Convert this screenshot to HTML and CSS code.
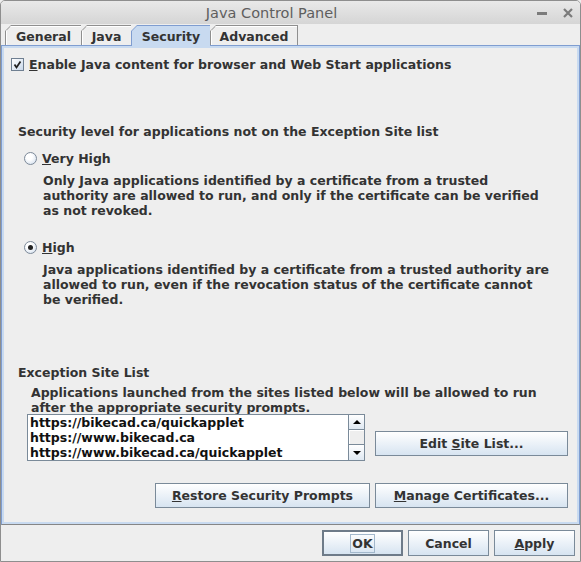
FILE: index.html
```html
<!DOCTYPE html>
<html>
<head>
<meta charset="utf-8">
<title>Java Control Panel</title>
<link rel="stylesheet" href="styles.css">
</head>
<body>
<div class="window">
  <div class="titlebar">
    <span class="title">Java Control Panel</span>
    <span class="wbtns">
      <svg class="wbtn" width="12" height="12" viewBox="0 0 12 12"><rect x="1" y="5" width="10" height="3" fill="#7b7b7b"/></svg>
      <svg class="wbtn" width="12" height="12" viewBox="0 0 12 12"><path d="M2 2 L10 10 M10 2 L2 10" stroke="#7b7b7b" stroke-width="2.2"/></svg>
    </span>
  </div>
  <div class="tabs">
    <div class="tab tab-general"><div class="tab-in">General</div></div>
    <div class="tab tab-java"><div class="tab-in">Java</div></div>
    <div class="tab tab-security selected"><div class="tab-in">Security</div></div>
    <div class="tab tab-advanced last"><div class="tab-in">Advanced</div></div>
  </div>
  <div class="panel">
    <div class="check-row">
      <span class="checkbox">
        <svg width="11" height="11" viewBox="0 0 11 11"><path d="M2.5 5.5 L4.5 8.5 L8.5 2.5" fill="none" stroke="#222" stroke-width="1.8"/></svg>
      </span>
      <span class="label"><u>E</u>nable Java content for browser and Web Start applications</span>
    </div>
    <div class="sec-label">Security level for applications not on the Exception Site list</div>
    <div class="radio-row first">
      <span class="radio"></span>
      <span class="label"><u>V</u>ery High</span>
    </div>
    <div class="desc">Only Java applications identified by a certificate from a trusted<br>authority are allowed to run, and only if the certificate can be verified<br>as not revoked.</div>
    <div class="radio-row second">
      <span class="radio on"><span class="dot"></span></span>
      <span class="label"><u>H</u>igh</span>
    </div>
    <div class="desc">Java applications identified by a certificate from a trusted authority are<br>allowed to run, even if the revocation status of the certificate cannot<br>be verified.</div>
    <div class="exc-label">Exception Site List</div>
    <div class="exc-desc">Applications launched from the sites listed below will be allowed to run<br>after the appropriate security prompts.</div>
    <div class="list-row">
      <div class="list">
        <div class="list-items">
          <div>https://bikecad.ca/quickapplet</div>
          <div>https://www.bikecad.ca</div>
          <div>https://www.bikecad.ca/quickapplet</div>
        </div>
        <div class="scrollbar">
          <div class="sb-btn"><span class="arrow up"></span></div>
          <div class="sb-track"></div>
          <div class="sb-btn"><span class="arrow down"></span></div>
        </div>
      </div>
      <button class="btn btn-edit"><span>Edit <u>S</u>ite List...</span></button>
    </div>
    <div class="panel-buttons">
      <button class="btn btn-restore"><span><u>R</u>estore Security Prompts</span></button>
      <button class="btn btn-manage"><span><u>M</u>anage Certificates...</span></button>
    </div>
  </div>
  <div class="buttonbar">
    <button class="btn btn-dialog default"><span class="focus">OK</span></button>
    <button class="btn btn-dialog"><span>Cancel</span></button>
    <button class="btn btn-dialog"><span><u>A</u>pply</span></button>
  </div>
</div>
</body>
</html>
```
FILE: styles.css
```css
html, body {
  margin: 0;
  padding: 0;
  background: #eeeeee;
}
body {
  font: bold 12.5px "DejaVu Sans", sans-serif;
  color: #333333;
}
.window {
  width: 579px;
  height: 560px;
  border: 1px solid #8e8e8e;
  border-radius: 5px 5px 0 0;
  background: #eeeeee;
  display: flex;
  flex-direction: column;
  overflow: hidden;
}
.titlebar {
  height: 23px;
  flex: none;
  background: linear-gradient(#e9e9e9, #d5d5d5);
  display: flex;
  align-items: center;
  justify-content: center;
  padding-right: 38px;
  position: relative;
}
.title {
  font: normal 14.5px "DejaVu Sans", sans-serif;
  color: #5e5e5e;
}
.wbtns {
  position: absolute;
  right: 6px;
  top: 6px;
  display: flex;
  gap: 14px;
}
.tabs {
  height: 21px;
  flex: none;
  display: flex;
  align-items: flex-end;
  padding-left: 4px;
  position: relative;
  z-index: 2;
}
.tab {
  height: 20px;
  background: #8f8f8f;
  padding: 1px 0 0 1px;
  box-sizing: border-box;
  clip-path: polygon(0 6px, 6px 0, 100% 0, 100% 100%, 0 100%);
}
.tab.last {
  padding-right: 1px;
}
.tab-in {
  height: 100%;
  background: #eeeeee;
  box-shadow: inset 1px 1px 0 #ffffff;
  clip-path: polygon(0 5px, 5px 0, 100% 0, 100% 100%, 0 100%);
  display: flex;
  align-items: center;
  justify-content: center;
  line-height: 15px;
  padding-top: 1px;
  box-sizing: border-box;
}
.tab-general { width: 76px; }
.tab-java { width: 50px; }
.tab-security { width: 79px; }
.tab-advanced { width: 88px; }
.tab.selected {
  background: #7f9dd0;
  height: 21px;
  margin-bottom: -1px;
}
.tab.selected .tab-in {
  background: #c8daf0;
  box-shadow: none;
  padding-bottom: 1px;
}
.panel {
  height: 480px;
  flex: none;
  box-sizing: border-box;
  border: 1px solid #7f9dd0;
  border-bottom-color: #858585;
  box-shadow: inset 0 0 0 2px #c8daf0;
  padding: 2px;
  display: flex;
  flex-direction: column;
  line-height: 15px;
}
.check-row {
  display: flex;
  align-items: center;
  margin: 9px 0 0 7px;
  height: 15px;
}
.checkbox {
  width: 11px;
  height: 11px;
  border: 1px solid #6f7f91;
  background: linear-gradient(135deg, #ffffff, #c9d8ea);
  display: flex;
  margin-right: 5px;
}
.sec-label {
  margin: 52px 0 0 14px;
}
.radio-row {
  display: flex;
  align-items: center;
  height: 15px;
  margin-left: 20px;
}
.radio-row.first { margin-top: 12px; }
.radio-row.second { margin-top: 22px; }
.radio {
  width: 11px;
  height: 11px;
  border: 1px solid #7d8a99;
  border-radius: 50%;
  background: radial-gradient(circle at 40% 35%, #ffffff 30%, #cbd9ea 100%);
  margin-right: 5px;
  display: flex;
  align-items: center;
  justify-content: center;
}
.radio .dot {
  width: 5px;
  height: 5px;
  border-radius: 50%;
  background: #222222;
}
.desc {
  margin: 7px 0 0 39px;
}
.exc-label {
  margin: 58px 0 0 14px;
}
.exc-desc {
  margin: 5px 0 0 27px;
}
.list-row {
  display: flex;
  align-items: flex-start;
  margin: -1px 0 0 23px;
}
.list {
  width: 336px;
  height: 45px;
  border: 1px solid #7a8a99;
  background: #ffffff;
  display: flex;
}
.list-items {
  flex: 1;
  padding: 0 0 0 2px;
  color: #111111;
  line-height: 15px;
  margin-top: 0;
}
.scrollbar {
  width: 15px;
  border-left: 1px solid #7a8a99;
  display: flex;
  flex-direction: column;
  background: #eeeeee;
}
.sb-btn {
  height: 14px;
  border-bottom: 1px solid #7a8a99;
  background: linear-gradient(#ffffff, #dfe8f2);
  display: flex;
  align-items: center;
  justify-content: center;
}
.sb-btn:last-child {
  border-bottom: none;
  border-top: 1px solid #7a8a99;
  height: 15px;
}
.sb-track {
  flex: 1;
  background: #eeeeee;
  box-shadow: inset 1px 1px 0 #ffffff;
}
.arrow {
  width: 0;
  height: 0;
  border-left: 4px solid transparent;
  border-right: 4px solid transparent;
}
.arrow.up { border-bottom: 4px solid #000000; }
.arrow.down { border-top: 4px solid #000000; }
.btn {
  font: bold 12.5px "DejaVu Sans", sans-serif;
  color: #333333;
  border: 1px solid #7a8a99;
  background: linear-gradient(#ffffff, #d7e4f1);
  padding: 0;
  margin: 0;
  display: flex;
  align-items: center;
  justify-content: center;
  box-sizing: border-box;
  white-space: pre;
}
.btn-edit {
  width: 193px;
  height: 25px;
  margin: 17px 0 0 10px;
}
.panel-buttons {
  display: flex;
  justify-content: flex-end;
  gap: 5px;
  margin: 22px 9px 0 0;
}
.btn-restore {
  width: 215px;
  height: 25px;
}
.btn-manage {
  width: 193px;
  height: 25px;
}
.buttonbar {
  flex: 1;
  display: flex;
  justify-content: flex-end;
  align-items: flex-start;
  gap: 5px;
  padding: 5px 5px 0 0;
}
.btn-dialog {
  width: 81px;
  height: 26px;
}
.btn-dialog.default {
  border: 2px solid #6e7b89;
}
.focus {
  border: 1px solid #a3b8cc;
  padding: 0 1px;
  line-height: 17px;
}
```
